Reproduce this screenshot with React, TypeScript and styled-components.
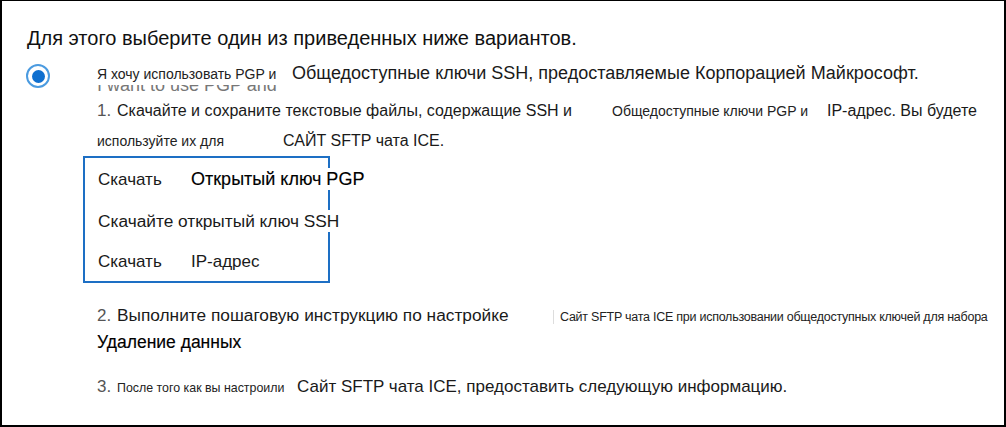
import styled, { createGlobalStyle } from "styled-components";

const Global = createGlobalStyle`
  html, body {
    margin: 0;
    padding: 0;
    background: #fff;
  }
  body {
    font-family: "Liberation Sans", Arial, "Noto Sans CJK SC", sans-serif;
    color: #111;
  }
`;

export default () => {
  return (
    <Frame>
      <Global />
      <Heading>Для этого выберите один из приведенных ниже вариантов.</Heading>
      <Option>
        <Radio>
          <Dot />
        </Radio>
        <Body>
          <TitleLine>
            <Ghost>I want to use PGP and</Ghost>
            <Small $w={195}>Я хочу использовать PGP и</Small>
            <Text $size={18}>Общедоступные ключи SSH, предоставляемые Корпорацией Майкрософт.</Text>
          </TitleLine>

          <Line $top={12}>
            <Num>1.</Num>
            <Text $w={495}>Скачайте и сохраните текстовые файлы, содержащие SSH и</Text>
            <Small $w={215}>Общедоступные ключи PGP и</Small>
            <Text>IP-адрес. Вы будете</Text>
          </Line>
          <Line $top={8}>
            <Small $w={186}>используйте их для</Small>
            <Text>САЙТ SFTP чата ICE.</Text>
          </Line>

          <Downloads>
            <DownloadRow>
              <Text $size={17} $w={93}>Скачать</Text>
              <Text $size={18} $strong>Открытый ключ PGP</Text>
            </DownloadRow>
            <DownloadRow>
              <Text $size={17.3}>Скачайте открытый ключ SSH</Text>
            </DownloadRow>
            <DownloadRow>
              <Text $size={17} $w={93}>Скачать</Text>
              <Text $size={17}>IP-адрес</Text>
            </DownloadRow>
          </Downloads>

          <Line $top={21}>
            <Num>2.</Num>
            <Text $size={17.3} $w={436}>Выполните пошаговую инструкцию по настройке</Text>
            <Tiny>Сайт SFTP чата ICE при использовании общедоступных ключей для набора</Tiny>
          </Line>
          <Line $top={5}>
            <Text $size={17.5} $strong>Удаление данных</Text>
          </Line>

          <Line $top={23}>
            <Num>3.</Num>
            <Small $size={12.4} $w={180}>После того как вы настроили</Small>
            <Text $size={17}>Сайт SFTP чата ICE, предоставить следующую информацию.</Text>
          </Line>
        </Body>
      </Option>
    </Frame>
  );
};

const Frame = styled.div`
  box-sizing: border-box;
  width: 1006px;
  height: 427px;
  border: 2px solid #000;
  border-top-width: 1px;
  padding: 24px 0 0 24px;
  overflow: hidden;
`;

const Heading = styled.div`
  font-size: 20px;
  line-height: 26px;
  color: #111;
  margin-left: 1px;
`;

const Option = styled.div`
  display: flex;
  align-items: flex-start;
  margin-top: 11px;
`;

const Radio = styled.div`
  box-sizing: border-box;
  width: 24px;
  height: 24px;
  border-radius: 50%;
  border: 2px solid #4b9be0;
  display: flex;
  align-items: center;
  justify-content: center;
  margin-top: 2px;
  flex-shrink: 0;
`;

const Dot = styled.div`
  width: 13px;
  height: 13px;
  border-radius: 50%;
  background: #0f6fcf;
`;

const Body = styled.div`
  display: flex;
  flex-direction: column;
  margin-left: 47px;
`;

const TitleLine = styled.div`
  position: relative;
  display: flex;
  align-items: baseline;
  height: 26px;
`;

const Ghost = styled.div`
  position: absolute;
  left: 0;
  top: 13px;
  font-size: 18px;
  color: #777;
  white-space: nowrap;
  clip-path: inset(10px 0 0 0);
`;

const Line = styled.div<{ $top?: number }>`
  display: flex;
  align-items: baseline;
  margin-top: ${(p) => p.$top ?? 0}px;
  white-space: nowrap;
`;

const Num = styled.span`
  font-size: 17px;
  color: #555;
  width: 20px;
`;

const Text = styled.span<{ $size?: number; $w?: number; $strong?: boolean }>`
  position: relative;
  font-size: ${(p) => p.$size ?? 16}px;
  line-height: 22px;
  color: ${(p) => (p.$strong ? "#000" : "#1a1a1a")};
  ${(p) => (p.$strong ? "-webkit-text-stroke: 0.15px #000;" : "")}
  background: #fff;
  white-space: nowrap;
  ${(p) => (p.$w ? `width: ${p.$w}px; flex-shrink: 0;` : "")}
`;

const Small = styled.span<{ $w?: number; $size?: number }>`
  position: relative;
  font-size: ${(p) => p.$size ?? 14}px;
  color: #222;
  white-space: nowrap;
  ${(p) => (p.$w ? `width: ${p.$w}px; flex-shrink: 0;` : "")}
`;

const Tiny = styled.span`
  font-size: 12.5px;
  letter-spacing: -0.25px;
  color: #222;
  border-left: 1px solid #ddd;
  padding-left: 6px;
`;

const Downloads = styled.div`
  box-sizing: border-box;
  width: 247px;
  height: 127px;
  margin-left: -14px;
  margin-top: 4px;
  border: 2px solid #1d6fc4;
  padding: 10px 0 0 13px;
  display: flex;
  flex-direction: column;
  gap: 19px;
`;

const DownloadRow = styled.div`
  display: flex;
  align-items: baseline;
  white-space: nowrap;
`;
